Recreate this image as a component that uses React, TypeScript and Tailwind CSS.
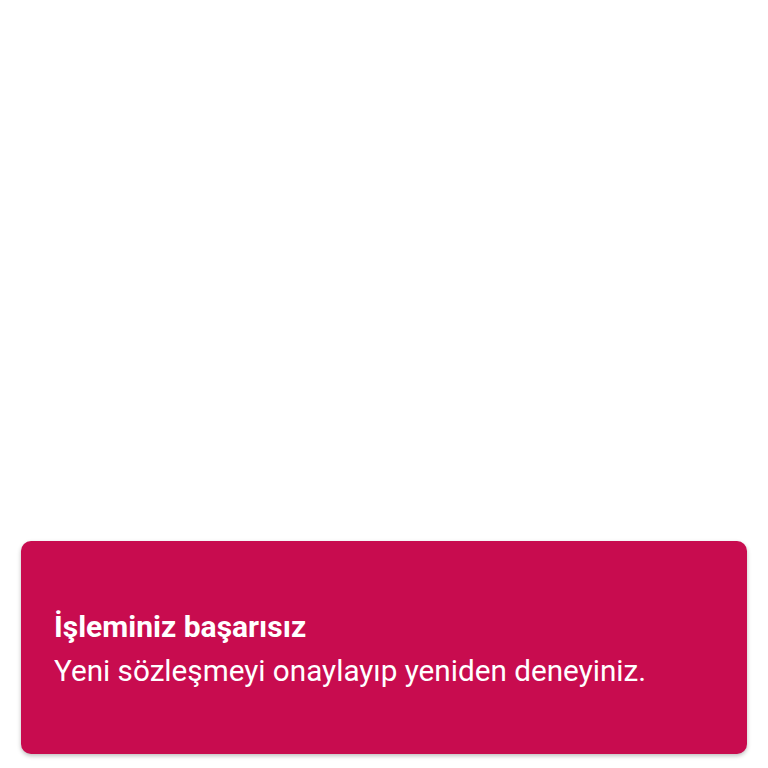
export default function App() {
  return (
    <div className="flex h-[768px] w-full flex-col justify-end bg-white px-[21px] pb-[14px] font-['Roboto',sans-serif]">
      <div className="flex h-[213px] flex-col gap-[8px] rounded-[10px] bg-[#c80c4f] px-[33px] pt-[68px] shadow-[0_2px_4px_rgba(0,0,0,0.25)]">
        <div className="text-[30px] font-bold leading-[36px] text-white">İşleminiz başarısız</div>
        <div className="text-[29.7px] leading-[36px] text-white">Yeni sözleşmeyi onaylayıp yeniden deneyiniz.</div>
      </div>
    </div>
  );
}
